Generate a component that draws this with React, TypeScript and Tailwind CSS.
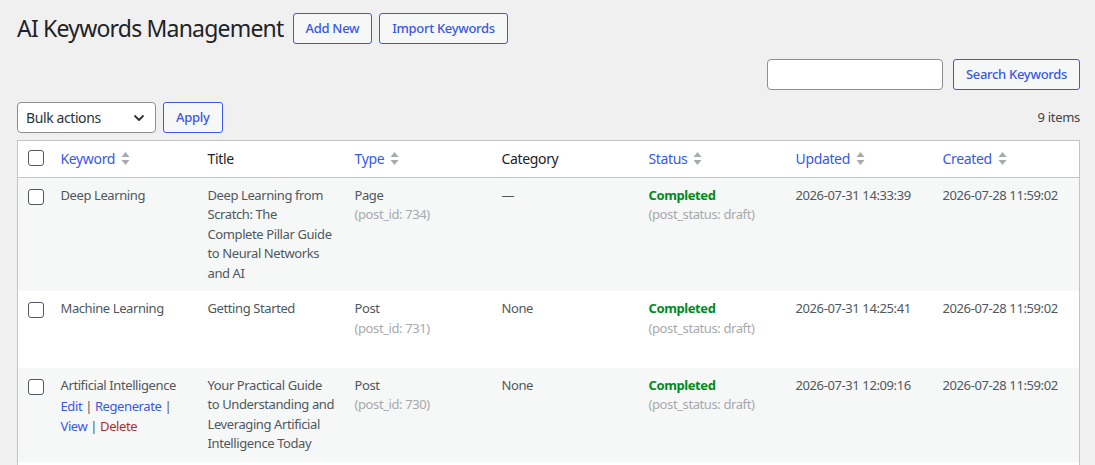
import React from 'react';

type Row = {
  keyword: string;
  title: string;
  type: string;
  postId: number;
  category: string;
  updated: string;
  created: string;
  hovered?: boolean;
};

const rows: Row[] = [
  {
    keyword: 'Deep Learning',
    title: 'Deep Learning from Scratch: The Complete Pillar Guide to Neural Networks and AI',
    type: 'Page',
    postId: 734,
    category: '—',
    updated: '2026-07-31 14:33:39',
    created: '2026-07-28 11:59:02',
  },
  {
    keyword: 'Machine Learning',
    title: 'Getting Started',
    type: 'Post',
    postId: 731,
    category: 'None',
    updated: '2026-07-31 14:25:41',
    created: '2026-07-28 11:59:02',
  },
  {
    keyword: 'Artificial Intelligence',
    title: 'Your Practical Guide to Understanding and Leveraging Artificial Intelligence Today',
    type: 'Post',
    postId: 730,
    category: 'None',
    updated: '2026-07-31 12:09:16',
    created: '2026-07-28 11:59:02',
    hovered: true,
  },
  {
    keyword: 'Neural Networks',
    title: 'Neural Networks Explained',
    type: 'Post',
    postId: 729,
    category: 'None',
    updated: '2026-07-31 11:48:05',
    created: '2026-07-28 11:59:02',
  },
];

// little up/down triangles next to sortable headers
function SortIcon() {
  return (
    <svg width="9" height="15" viewBox="0 0 9 15" className="ml-[6px] shrink-0" aria-hidden>
      <path d="M4.5 1 L8.5 6 L0.5 6 Z" fill="#a7aaad" />
      <path d="M0.5 9 L8.5 9 L4.5 14 Z" fill="#a7aaad" />
    </svg>
  );
}

function Checkbox() {
  return <span className="block w-4 h-4 bg-white border border-[#50575e] rounded-[3px]" />;
}

function OutlineButton({ children, className = '' }: { children: React.ReactNode; className?: string }) {
  return (
    <button
      className={`h-[31px] px-[12px] border border-[#3858e9] rounded-[3px] bg-[#f6f7f7] text-[#3858e9] text-[13px] font-medium leading-none tracking-[-0.3px] ${className}`}
    >
      {children}
    </button>
  );
}

function SortableTh({ label }: { label: string }) {
  return (
    <th className="px-[10px] py-[8px] text-left font-normal align-top">
      <span className="flex items-center text-[#3858e9]">
        {label}
        <SortIcon />
      </span>
    </th>
  );
}

function PlainTh({ label }: { label: string }) {
  return <th className="px-[10px] py-[8px] text-left font-normal text-[#1d2327] align-top">{label}</th>;
}

export default function App() {
  return (
    <div className="min-h-screen bg-[#f0f0f1] font-['Noto_Sans','Open_Sans',sans-serif] text-[#3c434a] pl-[17px] pr-[15px] pb-10">
      {/* Page title */}
      <div className="flex items-center pt-[13px] h-[44px]">
        <h1 className="text-[23px] font-normal text-[#1d2327] leading-[31px] tracking-[-0.8px] mr-[9px]">AI Keywords Management</h1>
        <OutlineButton>Add New</OutlineButton>
        <OutlineButton className="ml-[7px]">Import Keywords</OutlineButton>
      </div>

      {/* Search */}
      <div className="flex justify-end mt-[15px] gap-[10px]">
        <input className="w-[176px] h-[31px] bg-white border border-[#8c8f94] rounded-[4px] px-2 text-sm outline-none" />
        <OutlineButton>Search Keywords</OutlineButton>
      </div>

      {/* Bulk actions */}
      <div className="flex items-center justify-between mt-[12px]">
        <div className="flex gap-[7px]">
          <div className="w-[139px] h-[31px] bg-white border border-[#8c8f94] rounded-[4px] flex items-center justify-between pl-[8px] pr-[8px] text-[14px] tracking-[-0.4px] text-[#2c3338]">
            <span>Bulk actions</span>
            <svg width="16" height="16" viewBox="0 0 16 16" aria-hidden>
              <path d="M4 6 L8 10 L12 6" fill="none" stroke="#2c3338" strokeWidth="1.8" strokeLinecap="round" strokeLinejoin="round" />
            </svg>
          </div>
          <OutlineButton>Apply</OutlineButton>
        </div>
        <span className="text-[13px] tracking-[-0.3px] text-[#3c434a]">9 items</span>
      </div>

      {/* Table */}
      <table className="mt-[7px] w-full table-fixed border border-[#c3c4c7] bg-white border-collapse">
        <thead>
          <tr className="border-b border-[#c3c4c7] text-[14px] leading-[1.4] tracking-[-0.35px]">
            <th className="w-[33px] pl-[10px] pt-[9px] align-top">
              <Checkbox />
            </th>
            <SortableTh label="Keyword" />
            <PlainTh label="Title" />
            <SortableTh label="Type" />
            <PlainTh label="Category" />
            <SortableTh label="Status" />
            <SortableTh label="Updated" />
            <SortableTh label="Created" />
          </tr>
        </thead>
        <tbody>
          {rows.map((r, i) => (
            <tr
              key={r.postId}
              className={`text-[13px] leading-[1.5] tracking-[-0.4px] text-[#50575e] ${i % 2 === 0 ? 'bg-[#f6f7f7]' : 'bg-white'}`}
            >
              <td className="pl-[10px] pt-[11px] align-top">
                <Checkbox />
              </td>
              <td className="px-[10px] py-[8px] align-top">
                <div>{r.keyword}</div>
                <div className={`pt-[2px] ${r.hovered ? '' : 'invisible'}`}>
                  <a className="text-[#3858e9]">Edit</a> | <a className="text-[#3858e9]">Regenerate</a> |{' '}
                  <a className="text-[#3858e9]">View</a> | <a className="text-[#b32d2e]">Delete</a>
                </div>
              </td>
              <td className="px-[10px] py-[8px] align-top">{r.title}</td>
              <td className="px-[10px] py-[8px] align-top">
                <div>{r.type}</div>
                <div className="text-[#a7aaad]">(post_id: {r.postId})</div>
              </td>
              <td className="px-[10px] py-[8px] align-top">{r.category}</td>
              <td className="px-[10px] py-[8px] align-top">
                <div className="font-bold text-[#008a20]">Completed</div>
                <div className="text-[#a7aaad]">(post_status: draft)</div>
              </td>
              <td className="px-[10px] py-[8px] align-top">{r.updated}</td>
              <td className="px-[10px] py-[8px] align-top">{r.created}</td>
            </tr>
          ))}
        </tbody>
      </table>
    </div>
  );
}
